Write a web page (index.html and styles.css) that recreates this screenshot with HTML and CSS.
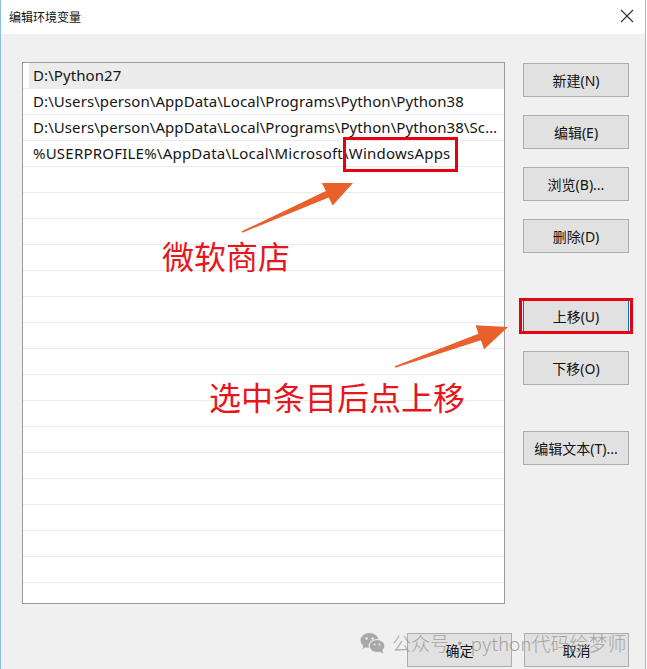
FILE: index.html
```html
<!DOCTYPE html>
<html lang="zh-CN">
<head>
<meta charset="utf-8">
<title>编辑环境变量</title>
<link rel="stylesheet" href="styles.css">
</head>
<body>
<div class="window">
  <header class="titlebar">
    <span class="title">编辑环境变量</span>
    <span class="close">
      <svg width="14" height="14" viewBox="0 0 14 14"><path d="M1 1 L13 13 M13 1 L1 13" stroke="#333" stroke-width="1.2" fill="none"/></svg>
    </span>
  </header>

  <main class="body">
    <div class="main">
      <div class="list">
        <div class="row sel">D:\Python27</div>
        <div class="row">D:\Users\person\AppData\Local\Programs\Python\Python38</div>
        <div class="row">D:\Users\person\AppData\Local\Programs\Python\Python38\Scripts\</div>
        <div class="row open caps">%USERPROFILE%\AppData\Local\Microsoft\<span class="mark">WindowsApps</span></div>
        <div class="row"></div>
        <div class="row"></div>
        <div class="row"></div>
        <div class="row"></div>
        <div class="row"></div>
        <div class="row"></div>
        <div class="row"></div>
        <div class="row"></div>
        <div class="row"></div>
        <div class="row"></div>
        <div class="row"></div>
        <div class="row"></div>
        <div class="row"></div>
        <div class="row"></div>
        <div class="row"></div>
        <div class="row"></div>
        <div class="row"></div>
      </div>

      <div class="side">
        <button class="btn">新建(N)</button>
        <button class="btn">编辑(E)</button>
        <button class="btn">浏览(B)...</button>
        <button class="btn">删除(D)</button>
        <span class="focus-ring gap-lg"><button class="btn focused">上移(U)</button></span>
        <button class="btn">下移(O)</button>
        <button class="btn gap-lg">编辑文本(T)...</button>
      </div>
    </div>

    <div class="footer">
      <button class="btn">确定</button>
      <button class="btn">取消</button>
    </div>
  </main>

  <!-- callouts drawn over the dialog -->
  <svg class="arrows" width="647" height="669" viewBox="0 0 647 669">
    <polygon fill="#e8602c" points="241.7,231.3 325.9,191.1 321.9,183.0 353,183 332.7,205.6 328.7,197.5 242.3,232.7"/>
    <polygon fill="#e8602c" points="394.7,366.2 478.5,333.7 475.5,325.2 508,327 484.1,349.3 480.9,340.3 395.3,367.8"/>
  </svg>
  <div class="note note-store">微软商店</div>
  <div class="note note-move">选中条目后点上移</div>

  <div class="watermark">
    <svg width="26" height="22" viewBox="0 0 26 22">
      <ellipse cx="9.5" cy="8.5" rx="9" ry="7.5" fill="#8a8a8a"/>
      <path d="M3.5 13 L2.5 17 L7 14.5 Z" fill="#8a8a8a"/>
      <ellipse cx="17" cy="14" rx="8" ry="6.5" fill="#8a8a8a" stroke="#f0f0f0" stroke-width="1.2"/>
      <path d="M22 18 L23.5 21.5 L19 19.5 Z" fill="#8a8a8a"/>
      <circle cx="6.5" cy="6.5" r="1.2" fill="#f0f0f0"/>
      <circle cx="12.5" cy="6.5" r="1.2" fill="#f0f0f0"/>
      <circle cx="14.5" cy="12.5" r="1" fill="#f0f0f0"/>
      <circle cx="19.5" cy="12.5" r="1" fill="#f0f0f0"/>
    </svg>
    <span>公众号 · python代码绘梦师</span>
  </div>
</div>
</body>
</html>
```

FILE: styles.css
```css
* { box-sizing: border-box; }

html, body {
  margin: 0;
  padding: 0;
  background: #ffffff;
}

body {
  width: 647px;
  height: 669px;
  overflow: hidden;
  font-family: "Noto Sans", "Noto Sans CJK SC", sans-serif;
  color: #000;
}

.window {
  position: relative;
  width: 646px;
  height: 669px;
  background: #f0f0f0;
  border-left: 1px solid #8dbde6;
  border-right: 1px solid #8dbde6;
  display: flex;
  flex-direction: column;
  overflow: hidden;
}

/* title bar */
.titlebar {
  height: 34px;
  flex: none;
  background: #fff;
  display: flex;
  align-items: center;
  justify-content: space-between;
  padding: 0 11px 2px 8px;
}

.title {
  font-family: "Noto Sans CJK SC", sans-serif;
  font-size: 12px;
  color: #111;
}

.close {
  display: flex;
  width: 14px;
  height: 14px;
}

/* dialog body */
.body {
  flex: 1;
  display: flex;
  flex-direction: column;
  padding: 28px 16px 0 21px;
}

.main {
  display: flex;
  gap: 18px;
}

.list {
  width: 483px;
  height: 542px;
  flex: none;
  background: #fff;
  border: 1px solid #9a9a9a;
  overflow: hidden;
  display: flex;
  flex-direction: column;
}

.row {
  flex: none;
  height: 26px;
  line-height: 25px;
  border-bottom: 1px solid #ebebeb;
  padding: 0 7px 0 10px;
  font-size: 15px;
  letter-spacing: 0.08px;
  color: #151515;
  white-space: nowrap;
  overflow: hidden;
  text-overflow: ellipsis;
}

.row.open {
  overflow: visible;
}

/* the capitals in %USERPROFILE% run wider in the system UI font */
.row.caps {
  letter-spacing: 0.22px;
}

.row.sel {
  background: linear-gradient(to right, #fff 6px, #ececec 6px);
}

/* red outline around a path segment */
.mark {
  position: relative;
}

.mark::after {
  content: "";
  position: absolute;
  left: -6px;
  right: -7px;
  top: -6px;
  bottom: -9px;
  border: 3px solid #e60012;
}

.side {
  display: flex;
  flex-direction: column;
  gap: 18px;
  padding-top: 1px;
}

.gap-lg { margin-top: 28px; }

.btn {
  width: 106px;
  height: 34px;
  background: #e1e1e1;
  border: 1px solid #adadad;
  border-radius: 0;
  font-family: "Noto Sans", "Noto Sans CJK SC", sans-serif;
  font-size: 14px;
  color: #111;
  padding: 0;
}

.btn.focused {
  border-color: #0078d7;
}

.focus-ring {
  position: relative;
  display: block;
  width: 106px;
  height: 34px;
}

.focus-ring .btn {
  display: block;
}

.focus-ring::after {
  content: "";
  position: absolute;
  left: -4px;
  right: -4px;
  top: -1px;
  bottom: -1px;
  border: 3px solid #e60012;
}

.footer {
  display: flex;
  justify-content: flex-end;
  gap: 12px;
  margin-top: 29px;
}

.footer .btn {
  width: 105px;
  font-family: "Noto Sans CJK SC", sans-serif;
}

/* callouts */
.arrows {
  position: absolute;
  left: -1px;
  top: 0;
  pointer-events: none;
}

.note {
  position: absolute;
  font-family: "Noto Sans CJK SC", sans-serif;
  font-size: 32px;
  line-height: 32px;
  color: #e8161c;
  white-space: nowrap;
}

.note-store { left: 161px; top: 239px; }
.note-move { left: 208px; top: 380px; }

.watermark {
  position: absolute;
  left: 359px;
  top: 629px;
  display: flex;
  align-items: center;
  gap: 6px;
  opacity: 0.7;
  pointer-events: none;
}

.watermark span {
  font-family: "Noto Sans CJK SC", sans-serif;
  font-size: 19px;
  font-weight: 300;
  color: #8a8a8a;
  white-space: nowrap;
  word-spacing: -3px;
}
```
